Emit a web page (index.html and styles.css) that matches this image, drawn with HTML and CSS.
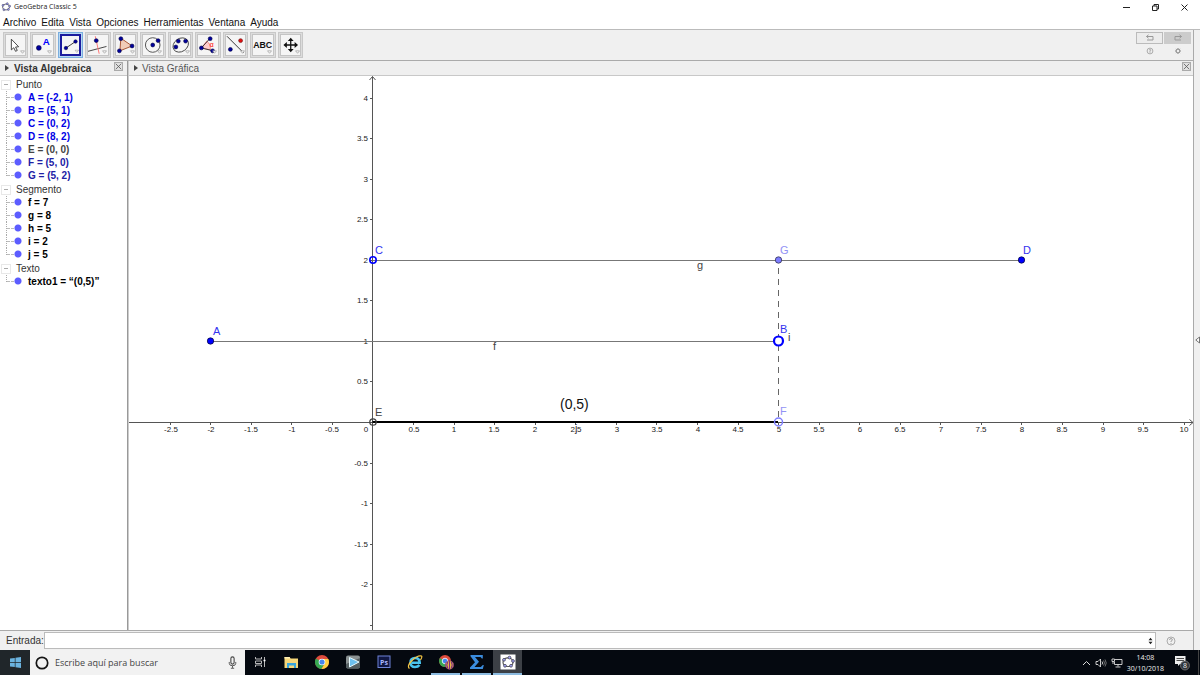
FILE: index.html
```html
<!DOCTYPE html>
<html lang="es">
<head>
<meta charset="utf-8">
<meta name="viewport" content="width=device-width, initial-scale=1">
<title>GeoGebra Classic 5</title>
<link rel="stylesheet" href="styles.css">
</head>
<body>
<div class="app">
  <header class="titlebar">
    <svg class="app-icon" viewBox="0 0 12 12" aria-hidden="true"><ellipse cx="6" cy="6" rx="4.2" ry="3.6" fill="none" stroke="#556" stroke-width="1"/><g fill="#99f" stroke="#445" stroke-width=".6"><circle cx="7.5" cy="2" r="1.2"/><circle cx="2.4" cy="4" r="1.2"/><circle cx="3.5" cy="9.3" r="1.2"/><circle cx="8.8" cy="9" r="1.2"/><circle cx="10.4" cy="5" r="1.2"/></g></svg>
    <h1 class="title">GeoGebra Classic 5</h1>
    <div class="window-controls">
      <button class="plain win" aria-label="Minimizar"><svg viewBox="0 0 9 9"><path d="M1 4.500h7" stroke="#222" fill="none"/></svg></button>
      <button class="plain win" aria-label="Restaurar"><svg viewBox="0 0 9 9"><path d="M1.500 3h4.500v4.500H1.500zM3 3V1.500h4.500V6H6" stroke="#222" fill="none"/></svg></button>
      <button class="plain win" aria-label="Cerrar"><svg viewBox="0 0 9 9"><path d="M1.500 1.500l6 6M7.500 1.500l-6 6" stroke="#222" fill="none"/></svg></button>
    </div>
  </header>

  <nav class="menubar" aria-label="Menú">
    <button class="plain">Archivo</button><button class="plain">Edita</button><button class="plain">Vista</button><button class="plain">Opciones</button><button class="plain">Herramientas</button><button class="plain">Ventana</button><button class="plain">Ayuda</button>
  </nav>

  <div class="workspace">
    <div class="main">
      <div class="toolbar">
        <div class="tools">
          <button class="tool" aria-label="Elige y mueve"><svg viewBox="0 0 20 20"><path d="M5.500 4v11l2.500-2.200 1.800 3.700 1.800-.9-1.800-3.500 3.200-.3z" fill="#fff" stroke="#333" stroke-width=".9"/><path class="more" d="M15 16h4l-2 2.500z"/></svg></button>
          <button class="tool" aria-label="Punto"><svg viewBox="0 0 20 20"><circle cx="6" cy="13" r="2.500" class="pt"/><text x="10" y="10" class="tool-a">A</text><path class="more" d="M15 16h4l-2 2.500z"/></svg></button>
          <button class="tool selected" aria-label="Segmento"><svg viewBox="0 0 20 20"><path d="M4.500 13.500l11-7.500" stroke="#222"/><circle cx="4.500" cy="13.500" r="2" class="pt"/><circle cx="15.500" cy="6" r="2" class="pt"/><path class="more" d="M15 16h4l-2 2.500z"/></svg></button>
          <button class="tool" aria-label="Perpendicular"><svg viewBox="0 0 20 20"><path d="M0 16.500l19-5" stroke="#444"/><path d="M7.500 1l4 18" stroke="#f77"/><circle cx="8.500" cy="5.500" r="2" class="pt"/><path class="more" d="M15 16h4l-2 2.500z"/></svg></button>
          <button class="tool" aria-label="Polígono"><svg viewBox="0 0 20 20"><path d="M5 3l11.500 8L4 16z" fill="#f1cdb8" stroke="#a65330"/><circle cx="5" cy="3.500" r="2" class="pt"/><circle cx="16.500" cy="11" r="2" class="pt"/><circle cx="3.500" cy="16" r="2" class="pt"/><path class="more" d="M15 16h4l-2 2.500z"/></svg></button>
          <button class="tool" aria-label="Circunferencia"><svg viewBox="0 0 20 20"><circle cx="10" cy="10" r="7.500" fill="none" stroke="#444" stroke-width=".9"/><circle cx="10" cy="10" r="2" class="pt"/><circle cx="15.500" cy="5.500" r="2" class="pt"/><path class="more" d="M15 16h4l-2 2.500z"/></svg></button>
          <button class="tool" aria-label="Elipse"><svg viewBox="0 0 20 20"><ellipse cx="10" cy="10" rx="8.500" ry="6.700" transform="rotate(-35 10 10)" fill="none" stroke="#444" stroke-width=".9"/><circle cx="5" cy="12" r="2" class="pt"/><circle cx="7.500" cy="6" r="2" class="pt"/><circle cx="15" cy="6" r="2" class="pt"/><path class="more" d="M15 16h4l-2 2.500z"/></svg></button>
          <button class="tool" aria-label="Ángulo"><svg viewBox="0 0 20 20"><path d="M3.500 13L9 6a9 9 0 0 1 3.500 9z" fill="#fcc" stroke="#f66" stroke-width=".7"/><path d="M3.500 13l9-10M3.500 13l12 3" stroke="#333"/><text x="12" y="12" class="tool-angle">α</text><circle cx="3.500" cy="13" r="2" class="pt"/><circle cx="12.500" cy="3.500" r="2" class="pt"/><circle cx="15" cy="16" r="2" class="pt"/><path class="more" d="M15 16h4l-2 2.500z"/></svg></button>
          <button class="tool" aria-label="Simetría"><svg viewBox="0 0 20 20"><path d="M1 1l17 17" stroke="#333"/><circle cx="4.500" cy="14.500" r="2" class="pt"/><circle cx="15" cy="5.500" r="2" fill="#e01010" stroke="#611" stroke-width=".6"/><path class="more" d="M15 16h4l-2 2.500z"/></svg></button>
          <button class="tool" aria-label="Texto"><svg viewBox="0 0 20 20"><text x="10" y="13" class="tool-abc">ABC</text><path class="more" d="M15 16h4l-2 2.500z"/></svg></button>
          <button class="tool" aria-label="Desplaza vista gráfica"><svg viewBox="0 0 20 20"><path d="M10 4v12M4 10h12" stroke="#111" stroke-width="1.300"/><path d="M10 2.500l3 3.500H7zM10 17.500l3-3.500H7zM2.500 10L6 7v6zM17.500 10L14 7v6z" fill="#111"/><path class="more" d="M15 16h4l-2 2.500z"/></svg></button>
        </div>
        <div class="actions">
          <button class="undo" aria-label="Deshace"><svg viewBox="0 0 10 8"><path d="M3.500.8L1.500 2.500l2 1.700M1.500 2.500h6.500v3.500H2" fill="none" stroke="#999"/></svg></button>
          <button class="undo redo" aria-label="Rehace"><svg viewBox="0 0 10 8"><path d="M6.500.8l2 1.700-2 1.700M8.500 2.500H2v3.500h6" fill="none" stroke="#999"/></svg></button>
          <button class="plain small" aria-label="Ayuda"><svg viewBox="0 0 8 8"><circle cx="4" cy="4" r="2.900" fill="none" stroke="#999" stroke-width=".8"/><path d="M3 3.200q1-1.500 2 0L4 4.200v1.600" fill="none" stroke="#999" stroke-width=".8"/></svg></button>
          <button class="plain small" aria-label="Preferencias"><svg viewBox="0 0 8 8"><circle cx="4" cy="4" r="1.800" fill="none" stroke="#999" stroke-width="1.200"/><path d="M4 1v1M4 6v1M1 4h1M6 4h1M1.900 1.900l.7.700M5.400 5.400l.7.700M6.100 1.900l-.7.700M2.600 5.400l-.7.700" stroke="#999"/></svg></button>
        </div>
      </div>

      <div class="views">
        <section class="algebra">
          <header class="view-head">
            <svg class="arrow" viewBox="0 0 4 6"><path d="M0 0l4 3-4 3z" fill="#444"/></svg>
            <h2 class="view-title active">Vista Algebraica</h2>
            <button class="close" aria-label="Cierra"><svg viewBox="0 0 9 9"><path d="M1 1l7 7M8 1l-7 7" stroke="#555"/></svg></button>
          </header>
          <div class="tree">
            <div class="group">
              <div class="group-name"><button class="fold" aria-label="Contrae Punto"></button>Punto</div>
              <ul class="items">
                <li class="item free">A = (-2, 1)</li>
                <li class="item free">B = (5, 1)</li>
                <li class="item free">C = (0, 2)</li>
                <li class="item free">D = (8, 2)</li>
                <li class="item grey">E = (0, 0)</li>
                <li class="item dependent">F = (5, 0)</li>
                <li class="item dependent">G = (5, 2)</li>
              </ul>
            </div>
            <div class="group">
              <div class="group-name"><button class="fold" aria-label="Contrae Segmento"></button>Segmento</div>
              <ul class="items">
                <li class="item">f = 7</li>
                <li class="item">g = 8</li>
                <li class="item">h = 5</li>
                <li class="item">i = 2</li>
                <li class="item">j = 5</li>
              </ul>
            </div>
            <div class="group">
              <div class="group-name"><button class="fold" aria-label="Contrae Texto"></button>Texto</div>
              <ul class="items">
                <li class="item">texto1 = “(0,5)”</li>
              </ul>
            </div>
          </div>
        </section>

        <section class="graphics">
          <header class="view-head">
            <svg class="arrow" viewBox="0 0 4 6"><path d="M0 0l4 3-4 3z" fill="#444"/></svg>
            <h2 class="view-title">Vista Gráfica</h2>
            <button class="close" aria-label="Cierra"><svg viewBox="0 0 9 9"><path d="M1 1l7 7M8 1l-7 7" stroke="#555"/></svg></button>
          </header>
          <div class="canvas">
            <svg class="plot" viewBox="129 76 1064 554" preserveAspectRatio="xMinYMin meet" role="img" aria-label="Segmentos en el plano">
              <path class="axis" d="M129 422.500H1193M1189.500 419.500l3.500 3-3.500 3M372.500 630V76.500M369.500 80l3-3.500 3 3.500"/>
              <path class="axis" d="M170.500 422v3M210.500 422v3M251.500 422v3M291.500 422v3M332.500 422v3M413.500 422v3M454.500 422v3M494.500 422v3M535.500 422v3M575.500 422v3M616.500 422v3M656.500 422v3M697.500 422v3M738.500 422v3M778.500 422v3M819.500 422v3M859.500 422v3M900.500 422v3M940.500 422v3M981.500 422v3M1021.500 422v3M1062.500 422v3M1103.500 422v3M1143.500 422v3M1184.500 422v3"/>
              <path class="axis" d="M370 98.500h2M370 138.500h2M370 179.500h2M370 219.500h2M370 260.500h2M370 300.500h2M370 341.500h2M370 381.500h2M370 463.500h2M370 503.500h2M370 544.500h2M370 584.500h2M370 625.500h2"/>
              <g class="num x">
                <text x="171" y="432">-2.5</text><text x="211" y="432">-2</text><text x="251" y="432">-1.5</text><text x="292" y="432">-1</text><text x="332" y="432">-0.5</text><text x="366" y="432">0</text><text x="414" y="432">0.5</text><text x="454" y="432">1</text><text x="494" y="432">1.5</text><text x="535" y="432">2</text><text x="576" y="432">2.5</text><text x="617" y="432">3</text><text x="657" y="432">3.5</text><text x="698" y="432">4</text><text x="738" y="432">4.5</text><text x="779" y="432">5</text><text x="819" y="432">5.5</text><text x="860" y="432">6</text><text x="900" y="432">6.5</text><text x="941" y="432">7</text><text x="981" y="432">7.5</text><text x="1022" y="432">8</text><text x="1062" y="432">8.5</text><text x="1103" y="432">9</text><text x="1143" y="432">9.5</text><text x="1184" y="432">10</text>
              </g>
              <g class="num y">
                <text x="368" y="101">4</text><text x="368" y="141">3.5</text><text x="368" y="182">3</text><text x="368" y="222">2.5</text><text x="368" y="263">2</text><text x="368" y="303">1.5</text><text x="368" y="344">1</text><text x="368" y="384">0.5</text><text x="368" y="466">-0.5</text><text x="368" y="506">-1</text><text x="368" y="547">-1.5</text><text x="368" y="587">-2</text>
              </g>
              <path class="segment" d="M210.500 341.500H778M372.500 260.500H1021"/>
              <path class="dashed" d="M778.500 260v162"/>
              <path class="thick" d="M372.500 422H778"/>
              <circle cx="210.500" cy="341" r="3.200" fill="#00f" stroke="#003" stroke-width=".7"/>
              <circle cx="1021.500" cy="260" r="3.200" fill="#00f" stroke="#003" stroke-width=".7"/>
              <circle cx="778.500" cy="260" r="3.200" fill="#7d7dff" stroke="#335" stroke-width=".8"/>
              <circle cx="373" cy="260" r="3.200" fill="none" stroke="#00f" stroke-width="1.600"/>
              <circle cx="373" cy="422" r="3.200" fill="none" stroke="#444" stroke-width="1.300"/>
              <circle cx="778.500" cy="341" r="4.500" fill="#fff" stroke="#00f" stroke-width="2.200"/>
              <circle cx="778.500" cy="422" r="4" fill="none" stroke="#7d7dff" stroke-width="1.500"/>
              <g class="label blue"><text x="213" y="335">A</text><text x="780" y="333">B</text><text x="375" y="254">C</text><text x="1023" y="254">D</text></g>
              <g class="label pale"><text x="780" y="254">G</text><text x="780" y="415">F</text></g>
              <g class="label dark"><text x="375" y="416">E</text><text x="493" y="350">f</text><text x="697" y="269">g</text><text x="788" y="341">i</text><text x="575" y="432">j</text></g>
              <text class="caption" x="560" y="409">(0,5)</text>
            </svg>
          </div>
        </section>
      </div>

      <form class="inputbar">
        <label for="entrada">Entrada:</label>
        <div class="entry">
          <input id="entrada" type="text" autocomplete="off">
          <button type="button" class="plain history" aria-label="Historial"><svg viewBox="0 0 5 8"><path d="M.5 3.200L2.500.8l2 2.400zM.5 4.800l2 2.400 2-2.400z" fill="#222"/></svg></button>
        </div>
        <button type="button" class="plain help" aria-label="Ayuda de entrada"><svg viewBox="0 0 10 10"><circle cx="5" cy="5" r="4" fill="none" stroke="#999" stroke-width=".8"/><path d="M3.600 4q0-1.500 1.400-1.500T6.400 4Q6 4.800 5 5.200v.8M5 7v1" fill="none" stroke="#999" stroke-width=".9"/></svg></button>
      </form>
    </div>
    <button class="side" aria-label="Muestra apariencias"><svg viewBox="0 0 5 8"><path d="M4.500 1v6L.8 4z" fill="#fff" stroke="#555" stroke-width=".8"/></svg></button>
  </div>

  <footer class="taskbar">
    <button class="start" aria-label="Inicio"><svg viewBox="0 0 11 11"><path d="M0 1.500L4.800.9v4.300H0zM5.500.8L11 0v5.200H5.500zM0 5.900h4.800v4.200L0 9.500zM5.500 5.900H11V11l-5.500-.8z" fill="#6bb3df"/></svg></button>
    <div class="search">
      <svg class="cortana" viewBox="0 0 14 14"><circle cx="7" cy="7" r="5.700" fill="none" stroke="#151515" stroke-width="1.700"/></svg>
      <input type="text" aria-label="Buscar" placeholder="Escribe aquí para buscar">
      <svg class="mic" viewBox="0 0 8 12"><rect x="2.500" y=".8" width="3" height="6.700" rx="1.500" fill="none" stroke="#444"/><path d="M1 5.500v1.300q0 2.200 3 2.200t3-2.200V5.500M4 9v2M2.500 11.300h3" fill="none" stroke="#555" stroke-width=".9"/></svg>
    </div>
    <div class="tasks">
      <button class="task" aria-label="Vista de tareas"><svg viewBox="0 0 16 16"><path d="M3.500 3v2h6V3M3.500 13v-2h6v2M3.500 7h6v2.500h-6zM12.500 3v10" fill="none" stroke="#ccc" stroke-width=".9"/><path d="M11.500 6.500h2" stroke="#fff" stroke-width="1.500"/></svg></button>
      <button class="task" aria-label="Explorador"><svg viewBox="0 0 16 16"><path d="M1.500 3h5l1 1.500H15V14H1.500z" fill="#f6d77a"/><path d="M1.500 3h5l1 1.500h-6z" fill="#fff0b5"/><path d="M4 14V9h9v5h-2v-2.500H6V14z" fill="#39a5dc"/></svg></button>
      <button class="task" aria-label="Chrome"><svg viewBox="0 0 16 16"><circle cx="8" cy="8" r="7" fill="#de4b3c"/><path d="M1.900 4.500A7 7 0 0 0 7.500 15l3-5.500L8 8z" fill="#36a852"/><path d="M8 5h6.300A7 7 0 0 1 7.500 15L11 9z" fill="#ffd043"/><circle cx="8" cy="8" r="3.300" fill="#fff"/><circle cx="8" cy="8" r="2.600" fill="#4685ee"/></svg></button>
      <button class="task" aria-label="Reproductor"><svg viewBox="0 0 16 16"><rect x="1" y="1.500" width="14" height="13" rx="2" fill="#8a9192"/><path d="M1 10L15 4v8.500a2 2 0 0 1-2 2H3a2 2 0 0 1-2-2z" fill="#555f62"/><path d="M4.500 3.500L14 8l-9.500 5z" fill="#6dc0ef" stroke="#e8faff"/></svg></button>
      <button class="task" aria-label="Photoshop"><svg viewBox="0 0 16 16"><rect x="2" y="2" width="12" height="11.500" fill="#101743" stroke="#6f83d8"/><text x="8" y="10.500" class="ps">Ps</text></svg></button>
      <button class="task" aria-label="Internet Explorer"><svg viewBox="0 0 16 16"><path d="M12.500 11Q11 13 8 13q-4.500 0-4.500-4.500T8 4q4.500 0 4.700 4.700H5" fill="none" stroke="#49c3ee" stroke-width="2.600"/><path d="M2.500 14.500Q-.5 12 5 6.500T14.500 2q1 1-1 4" fill="none" stroke="#f5c744" stroke-width="1.200"/></svg></button>
      <button class="task open" aria-label="Chrome, perfil"><svg viewBox="0 0 16 16"><circle cx="7" cy="7" r="6" fill="#de4b3c"/><path d="M1.800 4A6 6 0 0 0 7 13l3-5-3-1z" fill="#36a852"/><circle cx="7" cy="7" r="2.800" fill="#4685ee" stroke="#fff" stroke-width=".8"/><circle cx="11.500" cy="11" r="4.200" fill="#e8bb45" stroke="#7b2b84" stroke-width=".7"/><path d="M11.500 6.500v9M9.800 8q-2 3 0 6M13.200 8q2 3 0 6" fill="none" stroke="#7b2b84" stroke-width="1.100"/></svg></button>
      <button class="task open" aria-label="Sigma"><svg viewBox="0 0 16 16"><path d="M1.500 1h12.300v3.500h-1L11.500 3H6l4 4.700L5.500 13h6.300l2-2h1l-1 4H1v-1.500l5-5.300-4.500-6z" fill="#3b8cdd"/></svg></button>
      <button class="task open current" aria-label="GeoGebra"><svg viewBox="0 0 16 16"><rect x=".5" y=".5" width="15" height="15" fill="#fff"/><ellipse cx="8" cy="8.200" rx="5" ry="4.300" fill="none" stroke="#555" stroke-width="1.200"/><g fill="#aaf" stroke="#334" stroke-width=".7"><circle cx="9.500" cy="3.600" r="1.400"/><circle cx="4" cy="5.800" r="1.400"/><circle cx="5" cy="11.800" r="1.400"/><circle cx="11" cy="11.800" r="1.400"/><circle cx="13" cy="7" r="1.400"/></g></svg></button>
    </div>
    <div class="tray">
      <button class="plain" aria-label="Iconos ocultos"><svg width="9" height="10" viewBox="0 0 9 10"><path d="M1 7l3.500-3.500L8 7" fill="none" stroke="#ddd"/></svg></button>
      <button class="plain" aria-label="Volumen"><svg width="12" height="10" viewBox="0 0 12 10"><path d="M1 3.500h2L5.500 1v8L3 6.500H1zM7 3.500q1.200 1.500 0 3" fill="none" stroke="#ddd" stroke-width=".9"/><path d="M8.500 2.500q2 2.500 0 5M10 1.500q2.500 3.500 0 7" fill="none" stroke="#888" stroke-width=".8"/></svg></button>
      <button class="plain" aria-label="Red"><svg width="12" height="10" viewBox="0 0 12 10"><path d="M4 1.500h7v5H3.500V4M7 6.500v2M4.500 9h5M1 1h2.500v2.500H1zM2 3.500V6" fill="none" stroke="#ddd" stroke-width=".9"/></svg></button>
      <button class="plain clock"><span>14:08</span><span>30/10/2018</span></button>
      <button class="plain notes" aria-label="Notificaciones"><svg width="16" height="16" viewBox="0 0 16 16"><path d="M1 1h10.500v8H6L4 11V9H1z" fill="#eee"/><path d="M2.500 3.500H10M2.500 5.500H10" stroke="#222" stroke-width=".8"/><circle cx="11" cy="10.500" r="4.500" fill="#30343a" stroke="#888" stroke-width=".7"/><text x="11" y="13" class="badge">8</text></svg></button>
      <span class="desktop-edge"></span>
    </div>
  </footer>
</div>
</body>
</html>
```
FILE: styles.css
```css
* { box-sizing: border-box; }
body { margin: 0; background: #fff; color: #222; font: 10px/13px "Liberation Sans", Arial, sans-serif; }
button, input { font: inherit; color: inherit; margin: 0; border-radius: 0; }
svg { display: block; }
h1, h2, ul { margin: 0; padding: 0; list-style: none; }
.plain { border: 0; padding: 0; background: none; }
.app { display: flex; flex-direction: column; height: 100vh; overflow: hidden; }

.titlebar { display: flex; align-items: center; height: 14px; padding: 0 11px 0 1px; gap: 3px; }
.app-icon { width: 10px; height: 10px; }
.title { font: 7px/14px "Open Sans", "Noto Sans", sans-serif; flex: 1; }
.window-controls { display: flex; gap: 20px; }
.win svg { width: 9px; height: 9px; }
.menubar { display: flex; gap: 5px; height: 15px; padding: 1px 3px 0; color: #111; }

.workspace { display: flex; flex: 1; min-height: 0; border-top: 1px solid #bbb; }
.main { display: flex; flex-direction: column; flex: 1; min-width: 0; border-right: 1px solid #aaa; }
.side { width: 6px; padding: 0; border: 0; background: #f0f0f0; display: flex; align-items: center; justify-content: center; }
.side svg { width: 5px; height: 8px; }

.toolbar { display: flex; justify-content: space-between; height: 31px; padding: 2px 2px 2px 3px; background: #f0f0f0; border-bottom: 1px solid #aaa; }
.tools { display: grid; grid-template-columns: repeat(11, 1fr); gap: 2px; width: 300px; height: 26px; }
.tool { padding: 1px; border: 1px solid #c8c8c8; background: #dcdcdc; min-width: 0; }
.tool svg { width: 100%; height: 100%; background: #f5f5f5; border: 1px solid #c4c4c4; }
.tool.selected { background: #b7d8f3; border-color: #7aaede; }
.tool.selected svg { border: 2px solid #1c1c9e; }
.pt { fill: #00009c; stroke: #000040; stroke-width: .6; }
.more { fill: #fff; stroke: #888; stroke-width: .6; }
.tool-a { font: bold 10px "Liberation Sans", sans-serif; fill: #00f; }
.tool-angle { font: 7px "Liberation Sans", sans-serif; fill: #f00; }
.tool-abc { font: bold 9px "Liberation Sans", sans-serif; text-anchor: middle; fill: #111; }
.actions { display: grid; grid-template-columns: 27px 27px; grid-template-rows: 12px 14px; column-gap: 1px; }
.undo { display: flex; align-items: center; justify-content: center; padding: 0; border: 1px solid #bbb; background: #ececec; }
.redo { background: #ccc; border-color: #ccc; }
.undo svg { width: 10px; height: 8px; }
.small { display: flex; align-items: center; justify-content: center; }
.small svg { width: 8px; height: 8px; }

.views { display: flex; flex: 1; min-height: 0; }
.algebra { width: 128px; border-right: 1px solid #999; display: flex; flex-direction: column; }
.graphics { flex: 1; min-width: 0; display: flex; flex-direction: column; border-left: 1px solid #ccc; }
.view-head { display: flex; align-items: center; height: 15px; padding: 0 2px 0 5px; gap: 5px; background: #efefef; border-bottom: 1px solid #c8c8c8; }
.algebra .view-head { padding-right: 4px; }
.arrow { width: 4px; height: 6px; }
.view-title { flex: 1; font-size: 10px; font-weight: normal; color: #555; }
.graphics .view-title { margin-left: -1px; }
.view-title.active { font-weight: bold; color: #333; }
.close { width: 9px; height: 9px; padding: 0; border: 1px solid #aaa; background: #e0e0e0; align-self: flex-start; margin-top: 1px; }
.close svg { width: 7px; height: 7px; }
.tree { padding: 2px 0 0 1px; flex: 1; color: #333; }
.group { margin-bottom: 1px; }
.group-name { display: flex; align-items: center; gap: 5px; height: 13px; }
.fold { width: 10px; height: 10px; padding: 0; border: 1px solid #e8e8e8; background: linear-gradient(#aaa, #aaa) center / 4px 1px no-repeat #fff; }
.item { display: flex; align-items: center; height: 13px; padding-left: 5px; font-weight: bold; color: #000; background: radial-gradient(circle at 17px 6px, #5c5cff 3px, transparent 4px); }
.item::before { content: ""; width: 8px; height: 13px; margin-right: 13px; border-left: 1px dotted #aaa; background: linear-gradient(90deg, #bbb 75%, transparent 75%) 0 6px / 4px 1px repeat-x; }
.item:last-child::before { height: 7px; align-self: flex-start; }
.free { color: #0000e6; }
.grey { color: #444; }
.dependent { color: #2020a5; }

.canvas { flex: 1; min-height: 0; overflow: hidden; background: #fff; }
.plot { width: 100%; height: 100%; font-family: "Liberation Sans", Arial, sans-serif; }
.axis { fill: none; stroke: #555; stroke-width: 1; }
.num { font-size: 8px; fill: #222; }
.num.x { text-anchor: middle; }
.num.y { text-anchor: end; }
.segment { fill: none; stroke: #777; }
.dashed { stroke: #666; stroke-dasharray: 6 5; stroke-dashoffset: 3; }
.thick { stroke: #000; stroke-width: 2; }
.label { font-size: 11px; }
.blue { fill: #3333ef; }
.pale { fill: #9292f5; }
.dark { fill: #444; }
.caption { font-size: 14px; fill: #111; }

.inputbar { display: flex; align-items: center; height: 20px; padding: 0 17px 0 6px; background: #f0f0f0; border-top: 1px solid #aaa; color: #333; }
.entry { display: flex; flex: 1; height: 17px; border: 1px solid #bbb; background: #fff; }
.entry input { flex: 1; min-width: 0; border: 0; padding: 0 3px; outline: 0; }
.history { padding: 0 2px; }
.history svg { width: 5px; height: 8px; }
.help { margin-left: 10px; }
.help svg { width: 10px; height: 10px; }

.taskbar { display: flex; height: 25px; background: #050910; color: #eee; font-family: "Open Sans", "Noto Sans", sans-serif; }
.start { display: flex; align-items: center; justify-content: center; width: 30px; padding: 0; border: 0; background: #20262a; }
.start svg { width: 11px; height: 11px; }
.search { display: flex; align-items: center; width: 215px; padding: 0 8px 0 5px; gap: 6px; background: #f2f2f2; color: #444; }
.search input { flex: 1; min-width: 0; padding: 0; border: 0; background: none; font-size: 9px; }
.search input::placeholder { color: #444; opacity: 1; }
.cortana { width: 14px; height: 14px; }
.mic { width: 9px; height: 13px; }
.tasks { display: flex; }
.task { display: flex; align-items: center; justify-content: center; width: 29px; margin-right: 2px; padding: 0; border: 0; border-bottom: 2px solid transparent; background: none; }
.task svg { width: 16px; height: 16px; }
.open { border-bottom-color: #8cbbe0; }
.current { background: #3c4046; }
.ps { font: bold 7px "Open Sans", sans-serif; text-anchor: middle; fill: #a9b8ff; }
.tray { display: flex; align-items: center; margin-left: auto; gap: 4px; }
.clock { display: flex; flex-direction: column; align-items: center; font-size: 7px; line-height: 11px; }
.notes { margin-left: 6px; }
.badge { font: 7px "Open Sans", sans-serif; text-anchor: middle; fill: #eee; }
.desktop-edge { width: 1px; height: 25px; margin-left: 4px; margin-right: 1px; background: #444; }
```
